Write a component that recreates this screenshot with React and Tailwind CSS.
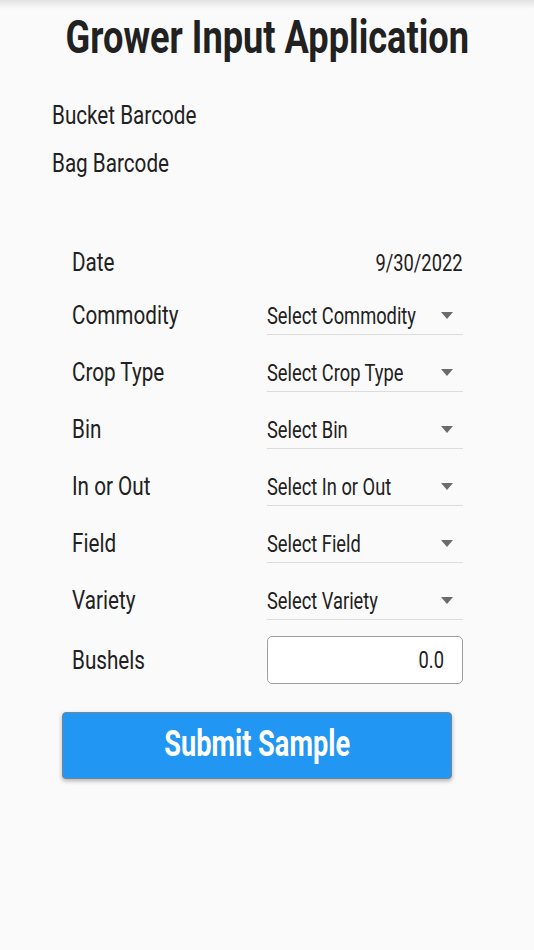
import React from "react";

function T({ children, className = "", origin = "origin-left", scale = "scale-x-[0.795]" }) {
  return (
    <span className={`inline-block whitespace-nowrap ${scale} ${origin} ${className}`}>
      {children}
    </span>
  );
}

function Arrow() {
  return (
    <svg width="12" height="7" viewBox="0 0 12 7" className="mt-[7px] mr-[10px] shrink-0">
      <path d="M0 0 L12 0 L6 7 Z" fill="#6b6b6b" />
    </svg>
  );
}

function SelectRow({ label, placeholder, h = "h-[57px]" }) {
  return (
    <div className={`flex items-baseline ${h}`}>
      <div className="w-[195px] shrink-0 text-[26px] leading-none">
        <T>{label}</T>
      </div>
      <div className="flex-1 min-w-0 flex items-start justify-between pb-[6px] border-b border-[#dcdcdc]">
        <div className="flex-1 min-w-0 text-[23px] leading-none">
          <T>{placeholder}</T>
        </div>
        <Arrow />
      </div>
    </div>
  );
}

export default function App() {
  return (
    <div className="relative w-[534px] min-h-[950px] bg-[#fafafa] text-[#212121] font-['Roboto','Noto_Sans',sans-serif] overflow-hidden">
      <div className="absolute top-0 left-0 right-0 h-[9px] bg-gradient-to-b from-[#e2e2e2] to-[#fafafa]" />

      <div className="pt-[14px] flex justify-center h-[60px]">
        <T origin="origin-center" scale="scale-x-[0.787]" className="text-[46px] leading-none font-bold">
          Grower Input Application
        </T>
      </div>

      <div className="mt-[42px] pl-[52px] h-[26px] text-[26px] leading-none">
        <T>Bucket Barcode</T>
      </div>
      <div className="mt-[22px] pl-[52px] h-[26px] text-[26px] leading-none">
        <T>Bag Barcode</T>
      </div>

      <div className="mt-[73px] pl-[72px] pr-[71px]">
        <div className="flex items-baseline h-[53px]">
          <div className="w-[195px] shrink-0 text-[26px] leading-none">
            <T>Date</T>
          </div>
          <div className="flex-1 flex justify-end pr-[1px] text-[23px] leading-none">
            <T origin="origin-right">9/30/2022</T>
          </div>
        </div>

        <SelectRow label="Commodity" placeholder="Select Commodity" />
        <SelectRow label="Crop Type" placeholder="Select Crop Type" />
        <SelectRow label="Bin" placeholder="Select Bin" />
        <SelectRow label="In or Out" placeholder="Select In or Out" />
        <SelectRow label="Field" placeholder="Select Field" />
        <SelectRow label="Variety" placeholder="Select Variety" h="h-[49px]" />

        <div className="flex items-center h-[48px]">
          <div className="w-[195px] shrink-0 text-[26px] leading-none">
            <T>Bushels</T>
          </div>
          <div className="flex-1 h-[48px] border border-[#9e9e9e] rounded-[5px] bg-white flex items-center justify-end pr-[18px] text-[23px] leading-none">
            <T origin="origin-right">0.0</T>
          </div>
        </div>
      </div>

      <button className="mt-[28px] ml-[62px] w-[390px] h-[67px] bg-[#2196f3] border border-[#7a8590] rounded-[4px] shadow-[0_2px_4px_rgba(0,0,0,0.3)] flex items-center justify-center pb-[3px]">
        <T origin="origin-center" scale="scale-x-[0.755]" className="text-[36px] leading-none font-bold text-white">
          Submit Sample
        </T>
      </button>
    </div>
  );
}
